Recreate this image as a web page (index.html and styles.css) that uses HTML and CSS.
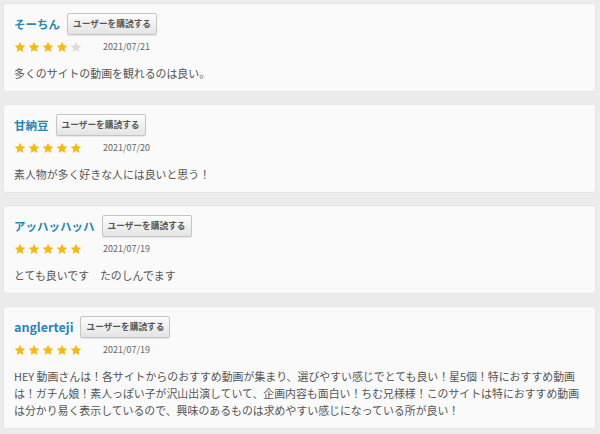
FILE: index.html
```html
<!DOCTYPE html>
<html lang="ja">
<head>
<meta charset="utf-8">
<link rel="stylesheet" href="styles.css">
</head>
<body>
<svg class="defs" width="0" height="0" aria-hidden="true">
  <defs>
    <symbol id="star" viewBox="0 0 24 24"><path d="M12 1.5l3.2 7 7.6.8-5.7 5.1 1.6 7.5L12 18l-6.7 3.9 1.6-7.5L1.2 9.3l7.6-.8z"/></symbol>
  </defs>
</svg>
<main class="list">
  <section class="card">
    <div class="head"><span class="name">そーちん</span><button class="sub">ユーザーを購読する</button></div>
    <div class="meta">
      <span class="stars"><svg class="on"><use href="#star"/></svg><svg class="on"><use href="#star"/></svg><svg class="on"><use href="#star"/></svg><svg class="on"><use href="#star"/></svg><svg class="off"><use href="#star"/></svg></span>
      <span class="date">2021/07/21</span>
    </div>
    <p class="body">多くのサイトの動画を観れるのは良い。</p>
  </section>
  <section class="card">
    <div class="head"><span class="name">甘納豆</span><button class="sub">ユーザーを購読する</button></div>
    <div class="meta">
      <span class="stars"><svg class="on"><use href="#star"/></svg><svg class="on"><use href="#star"/></svg><svg class="on"><use href="#star"/></svg><svg class="on"><use href="#star"/></svg><svg class="on"><use href="#star"/></svg></span>
      <span class="date">2021/07/20</span>
    </div>
    <p class="body">素人物が多く好きな人には良いと思う！</p>
  </section>
  <section class="card">
    <div class="head"><span class="name">アッハッハッハ</span><button class="sub">ユーザーを購読する</button></div>
    <div class="meta">
      <span class="stars"><svg class="on"><use href="#star"/></svg><svg class="on"><use href="#star"/></svg><svg class="on"><use href="#star"/></svg><svg class="on"><use href="#star"/></svg><svg class="on"><use href="#star"/></svg></span>
      <span class="date">2021/07/19</span>
    </div>
    <p class="body">とても良いです　たのしんでます</p>
  </section>
  <section class="card">
    <div class="head"><span class="name latin">anglerteji</span><button class="sub">ユーザーを購読する</button></div>
    <div class="meta">
      <span class="stars"><svg class="on"><use href="#star"/></svg><svg class="on"><use href="#star"/></svg><svg class="on"><use href="#star"/></svg><svg class="on"><use href="#star"/></svg><svg class="on"><use href="#star"/></svg></span>
      <span class="date">2021/07/19</span>
    </div>
    <p class="body">HEY 動画さんは！各サイトからのおすすめ動画が集まり、選びやすい感じでとても良い！星5個！特におすすめ動画<br>は！ガチん娘！素人っぽい子が沢山出演していて、企画内容も面白い！ちむ兄様様！このサイトは特におすすめ動画<br>は分かり易く表示しているので、興味のあるものは求めやすい感じになっている所が良い！</p>
  </section>
</main>
</body>
</html>
```

FILE: styles.css
```css
html, body {
  margin: 0;
  padding: 0;
  background: #ececec;
}
body {
  font-family: "Noto Sans CJK JP", "Noto Sans", sans-serif;
  color: #555;
}
.defs {
  position: absolute;
  width: 0;
  height: 0;
}
.list {
  display: flex;
  flex-direction: column;
  gap: 12px;
  padding: 3px 4px 3px 3px;
}
.card {
  background: #fafafa;
  border: 1px solid #e6e6e6;
  border-radius: 3px;
  padding: 9px 10px 9px 10px;
}
.head {
  display: flex;
  align-items: center;
  gap: 7px;
  height: 22px;
}
.name {
  font-size: 11.5px;
  font-weight: 700;
  color: #2a86b3;
  line-height: 22px;
}
.name.latin {
  font-size: 12.5px;
}
.sub {
  height: 22px;
  padding: 0 5px;
  font-family: "Noto Sans CJK JP", sans-serif;
  font-size: 8.7px;
  font-weight: 700;
  color: #555;
  background: linear-gradient(#fdfdfd, #e4e4e4);
  border: 1px solid #c4c4c4;
  border-radius: 2px;
  box-shadow: 0 1px 1px rgba(0,0,0,0.08);
  line-height: 20px;
}
.meta {
  display: flex;
  align-items: center;
  height: 14px;
  margin-top: 5px;
}
.stars {
  display: flex;
  gap: 2px;
  width: 89px;
}
.stars svg {
  width: 12px;
  height: 12px;
}
.stars .on {
  fill: #f5b914;
}
.stars .off {
  fill: #dcdcdc;
}
.date {
  font-size: 9px;
  color: #666;
  line-height: 14px;
}
.body {
  margin: 11px 0 0 0;
  font-size: 10.9px;
  line-height: 17px;
  color: #555;
}
```
